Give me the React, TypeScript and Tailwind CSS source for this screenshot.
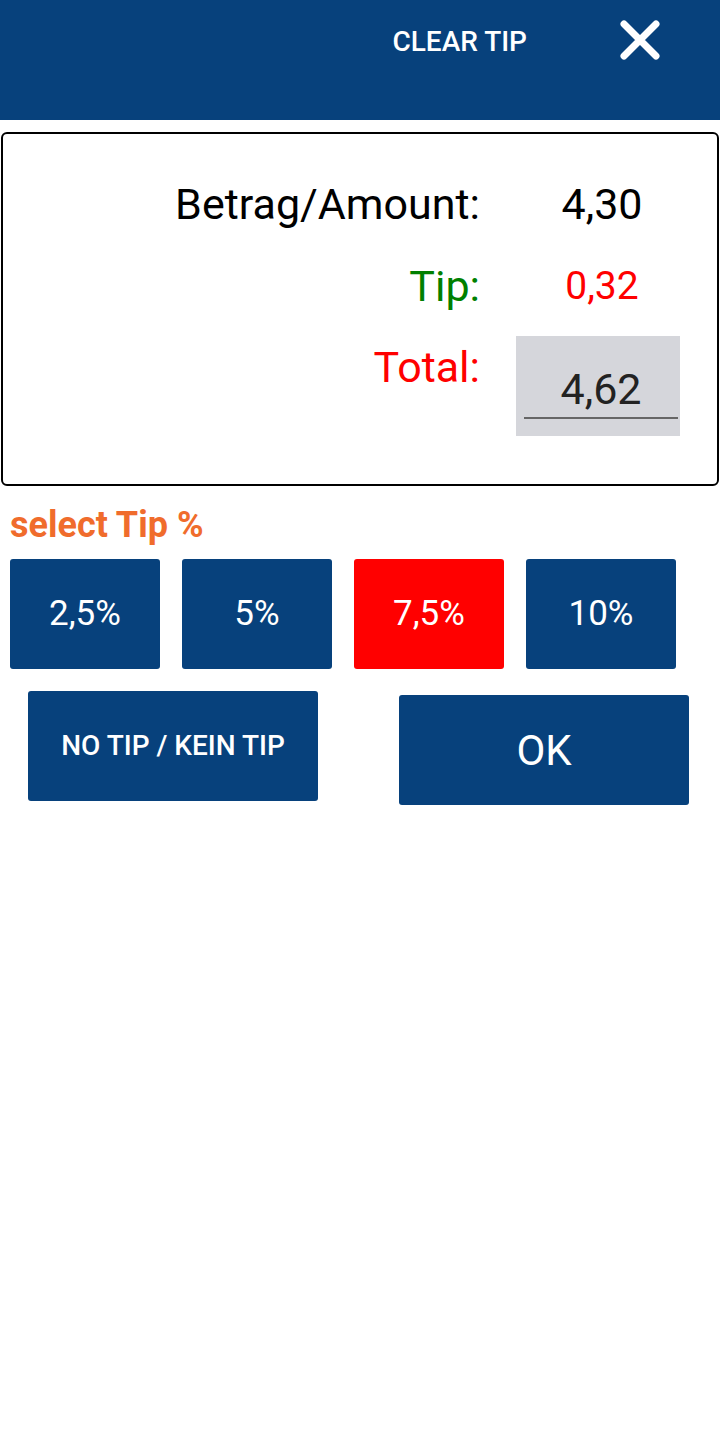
import { useState } from 'react';

const tips = ['2,5%', '5%', '7,5%', '10%'];

function CloseIcon() {
  return (
    <svg width="40" height="40" viewBox="0 0 40 40" fill="none">
      <path d="M4 4 L36 36 M36 4 L4 36" stroke="white" strokeWidth="7" strokeLinecap="round" />
    </svg>
  );
}

export default function App() {
  const [selected, setSelected] = useState(2);

  return (
    <div className="w-[720px] min-h-[1440px] bg-white font-['Roboto',sans-serif]">
      <header className="h-[120px] bg-[#07417c] flex justify-end pr-[60px]">
        <button className="mt-[28px] self-start text-white text-[28px] leading-[28px] font-medium">
          CLEAR TIP
        </button>
        <button className="mt-[20px] ml-[93px] self-start">
          <CloseIcon />
        </button>
      </header>

      <div className="mt-[12px] mx-[1px] h-[354px] border-2 border-black rounded-[6px] pt-[45px] pr-[37px]">
        <div className="flex">
          <div className="flex-1 text-right text-[43px] leading-[50px] text-black">Betrag/Amount:</div>
          <div className="ml-[36px] w-[164px] pl-[8px] text-center text-[43px] leading-[50px] text-black">4,30</div>
        </div>
        <div className="flex mt-[32px]">
          <div className="flex-1 text-right text-[43px] leading-[50px] text-[#008000]">Tip:</div>
          <div className="ml-[36px] w-[164px] pl-[8px] text-center text-[39px] leading-[50px] text-[#ff0000]">0,32</div>
        </div>
        <div className="flex mt-[25px]">
          <div className="flex-1 mt-[6px] text-right text-[43px] leading-[50px] text-[#ff0000]">Total:</div>
          <div className="ml-[36px] w-[164px] h-[100px] bg-[#d5d6db] pt-[28px]">
            <div className="pl-[6px] text-center text-[43px] leading-[50px] text-[#222222]">4,62</div>
            <div className="mt-[3px] ml-[8px] mr-[2px] h-[2px] bg-[#666666]" />
          </div>
        </div>
      </div>

      <div className="mt-[19px] ml-[10px] text-[36px] leading-[40px] font-bold text-[#f06c2c]">select Tip %</div>

      <div className="mt-[14px] ml-[10px] flex gap-[22px]">
        {tips.map((t, i) => (
          <button
            key={t}
            onClick={() => setSelected(i)}
            className={`w-[150px] h-[110px] rounded-[3px] text-white text-[35px] ${
              i === selected ? 'bg-[#ff0000]' : 'bg-[#07417c]'
            }`}
          >
            {t}
          </button>
        ))}
      </div>

      <div className="mt-[22px] flex items-start">
        <button className="ml-[28px] w-[290px] h-[110px] rounded-[3px] bg-[#07417c] text-white text-[28px] font-medium">
          NO TIP / KEIN TIP
        </button>
        <button className="ml-[81px] mt-[4px] w-[290px] h-[110px] rounded-[3px] bg-[#07417c] text-white text-[42px]">
          OK
        </button>
      </div>
    </div>
  );
}
